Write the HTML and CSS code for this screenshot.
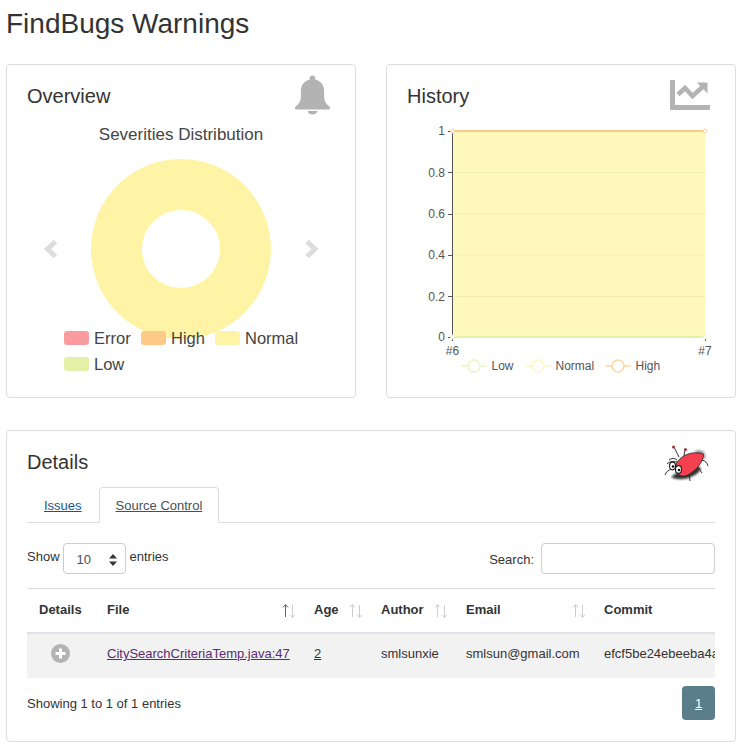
FILE: index.html
```html
<!DOCTYPE html>
<html lang="en">
<head>
<meta charset="utf-8">
<title>FindBugs Warnings</title>
<link rel="stylesheet" href="styles.css">
</head>
<body>
<h1 class="page-title">FindBugs Warnings</h1>
<div class="charts">
  <section class="card">
    <div class="card-head">
      <h2>Overview</h2>
      <svg class="bell" viewBox="0 0 36 40" width="35" height="40"><path fill="#b3b3b3" d="M18 0c-1.700 0-3 1.300-3 3v1.200C9.200 5.500 6 10 6 16v6c0 4.500-2 7-5 9.500C0 32.300 0 33 0 33.500 0 34.500 .8 35 1.600 35h32.800c.8 0 1.600-.5 1.600-1.500 0-.5 0-1.200-1-2C32 29 30 26.500 30 22v-6c0-6-3.200-10.500-9-11.800V3c0-1.700-1.300-3-3-3z"/><path fill="#b3b3b3" d="M13 36.500h10C23 38.500 20.800 40 18 40s-5-1.500-5-3.500z"/></svg>
    </div>
    <svg class="chart" viewBox="27 115 308 262" width="308" height="262">
      <text class="pie-title" x="181" y="140" text-anchor="middle">Severities Distribution</text>
      <path class="chev" d="M55.500 241.500l-8 7.500 8 7.500" />
      <path class="chev" d="M307 241.500l8 7.500-8 7.500" />
      <circle class="donut" cx="181" cy="249" r="64.500" />
      <rect class="sw-error" x="64" y="331" width="25" height="14" rx="3"/>
      <text class="leg" x="94" y="344">Error</text>
      <rect class="sw-high" x="141" y="331" width="25" height="14" rx="3"/>
      <text class="leg" x="171" y="344">High</text>
      <rect class="sw-normal" x="215" y="331" width="25" height="14" rx="3"/>
      <text class="leg" x="245" y="344">Normal</text>
      <rect class="sw-low" x="64" y="357" width="25" height="14" rx="3"/>
      <text class="leg" x="94" y="370">Low</text>
    </svg>
  </section>
  <section class="card">
    <div class="card-head">
      <h2>History</h2>
      <svg class="trend" viewBox="0 0 40 30" width="40" height="30">
        <path fill="#b3b3b3" d="M1 0h3c.6 0 1 .4 1 1v24h34c.6 0 1 .4 1 1v3c0 .6-.4 1-1 1H1c-.6 0-1-.4-1-1V1c0-.6.4-1 1-1z"/>
        <path fill="none" stroke="#b3b3b3" stroke-width="4.500" d="M8 14.500l7-6.500 7.500 8L33 6.500"/>
        <path fill="#b3b3b3" d="M26.800 2.500h10c.4 0 .7.300.7.700v10.300z"/>
      </svg>
    </div>
    <svg class="chart" viewBox="407 115 308 262" width="308" height="262">
      <rect class="area" x="452.500" y="131" width="252.500" height="206"/>
      <path class="grid" d="M452.500 172.500H705M452.500 214H705M452.500 255H705M452.500 296.500H705"/>
      <path class="axis" d="M452.500 131V341M448 131.500h4.500M448 172.500h4.500M448 214.500h4.500M448 255.500h4.500M448 296.500h4.500M448 337.500h4.500M705.500 337V341"/>
      <path class="line-high" d="M452.500 131H705"/>
      <path class="line-low" d="M452.500 337H705"/>
      <circle class="dot-high" cx="452.500" cy="131" r="2"/>
      <circle class="dot-high" cx="705" cy="131" r="2"/>
      <circle class="dot-low" cx="452.500" cy="337" r="2"/>
      <circle class="dot-low" cx="705" cy="337" r="2"/>
      <text class="tick" x="445" y="135" text-anchor="end">1</text>
      <text class="tick" x="445" y="177" text-anchor="end">0.8</text>
      <text class="tick" x="445" y="218" text-anchor="end">0.6</text>
      <text class="tick" x="445" y="259" text-anchor="end">0.4</text>
      <text class="tick" x="445" y="301" text-anchor="end">0.2</text>
      <text class="tick" x="445" y="341" text-anchor="end">0</text>
      <text class="tick" x="452.500" y="355" text-anchor="middle">#6</text>
      <text class="tick" x="705" y="355" text-anchor="middle">#7</text>
      <path class="lg-low" d="M461.500 366h25"/><circle class="lg-low lg-dot" cx="474" cy="366" r="6"/>
      <text class="tick" x="491.500" y="370">Low</text>
      <path class="lg-normal" d="M525.500 366h25"/><circle class="lg-normal lg-dot" cx="538" cy="366" r="6"/>
      <text class="tick" x="555.500" y="370">Normal</text>
      <path class="lg-high" d="M605.500 366h25"/><circle class="lg-high lg-dot" cx="618" cy="366" r="6"/>
      <text class="tick" x="635.500" y="370">High</text>
    </svg>
  </section>
</div>
<section class="card details">
  <div class="card-head details-head">
    <h2>Details</h2>
    <svg class="bug" viewBox="0 0 45 38" width="45" height="38">
      <path class="bug-shadow" d="M7 32c5 3 14 3 20 0 5-2 9-5 10-9l-6-3-16 6z"/>
      <path class="bug-shadow-top" d="M30 6c4-1 8-1 10 1l2 6-3 1z"/>
      <path class="bug-leg" d="M1 30c1-3 3-5 7-6M3 19c3-3 6-3 10-2M5 15c3-2 5-2 8 0M26 36l-1-7M38 28l-4-6M44 21c-1-3-2-5-6-6M10 2l5 10M21 5l-1 6"/>
      <circle cx="9.500" cy="2" r="1.600" fill="#a83a3f"/><circle cx="21.500" cy="4.500" r="1.600" fill="#a83a3f"/>
      <path fill="#f5404f" stroke="#222" stroke-width=".8" d="M12.500 18c3-5 9-9 16-10 4-.5 8-.2 11 1.300 0 3-1 6-3 9-4 6-9 10.500-15 12.500-4 .8-7-.5-8.500-4-.8-3-1.500-6-.5-8.800z"/>
      <ellipse cx="8.500" cy="21" rx="3" ry="3.800" fill="#fff" stroke="#222" stroke-width="1.200"/>
      <ellipse cx="14.500" cy="24.500" rx="3" ry="3.800" fill="#fff" stroke="#222" stroke-width="1.200"/>
      <circle cx="9" cy="21.500" r="1.300" fill="#111"/><circle cx="15" cy="25" r="1.300" fill="#111"/>
    </svg>
  </div>
  <ul class="tabs">
    <li class="tab"><a href="#issues">Issues</a></li>
    <li class="tab active"><a href="#scm">Source Control</a></li>
  </ul>
  <div class="controls">
    <label class="length">Show
      <span class="select">10<svg viewBox="0 0 8 12" width="8" height="12"><path fill="#333" d="M4 0l4 4.500H0zM4 12L0 7.500h8z"/></svg></span>
      entries</label>
    <label class="search">Search:<span class="input"></span></label>
  </div>
  <div class="table-wrap">
    <table class="data">
      <colgroup><col class="c1"><col class="c2"><col class="c3"><col class="c4"><col class="c5"><col class="c6"></colgroup>
      <thead>
        <tr>
          <th>Details</th>
          <th><span class="th"><span>File</span><svg class="sort on" viewBox="0 0 13 14" width="13" height="14"><path class="up" d="M3.500 13V1M1 3.500l2.500-3 2.500 3"/><path class="down" d="M10.500 1v12M8 10.500l2.500 3 2.500-3"/></svg></span></th>
          <th><span class="th"><span>Age</span><svg class="sort" viewBox="0 0 13 14" width="13" height="14"><path class="up" d="M3.500 13V1M1 3.500l2.500-3 2.500 3"/><path class="down" d="M10.500 1v12M8 10.500l2.500 3 2.500-3"/></svg></span></th>
          <th><span class="th"><span>Author</span><svg class="sort" viewBox="0 0 13 14" width="13" height="14"><path class="up" d="M3.500 13V1M1 3.500l2.500-3 2.500 3"/><path class="down" d="M10.500 1v12M8 10.500l2.500 3 2.500-3"/></svg></span></th>
          <th><span class="th"><span>Email</span><svg class="sort" viewBox="0 0 13 14" width="13" height="14"><path class="up" d="M3.500 13V1M1 3.500l2.500-3 2.500 3"/><path class="down" d="M10.500 1v12M8 10.500l2.500 3 2.500-3"/></svg></span></th>
          <th>Commit</th>
        </tr>
      </thead>
      <tbody>
        <tr>
          <td class="plus"><svg viewBox="0 0 19 19" width="19" height="19"><circle cx="9.500" cy="9.500" r="9.500" fill="#b3b3b3"/><path d="M9.500 4.500v10M4.500 9.500h10" stroke="#fff" stroke-width="3"/></svg></td>
          <td><a class="visited" href="#file">CitySearchCriteriaTemp.java:47</a></td>
          <td><a class="dark" href="#age">2</a></td>
          <td>smlsunxie</td>
          <td>smlsun@gmail.com</td>
          <td>efcf5be24ebeeba4a</td>
        </tr>
      </tbody>
    </table>
  </div>
  <div class="table-foot">
    <span>Showing 1 to 1 of 1 entries</span>
    <a class="page-btn" href="#p1">1</a>
  </div>
</section>
</body>
</html>
```
FILE: styles.css
```css
* { box-sizing: border-box; }
html, body { margin: 0; background: #fff; }
body {
  padding: 0 10px 0 6px;
  width: 746px;
  height: 749px;
  overflow: hidden;
  font-family: "Liberation Sans", Arial, sans-serif;
  font-size: 13px;
  color: #333;
}
.page-title {
  margin: 0;
  height: 64px;
  padding-top: 8px;
  font-size: 28px;
  line-height: 32px;
  font-weight: 400;
  color: #333;
}
.charts {
  display: grid;
  grid-template-columns: 350px 350px;
  column-gap: 30px;
}
.card {
  border: 1px solid #ddd;
  border-radius: 4px;
  padding: 10px 20px 20px;
  height: 334px;
  background: #fff;
}
.card-head {
  display: flex;
  justify-content: space-between;
  height: 40px;
}
.card-head h2 {
  margin: 0;
  font-size: 20px;
  line-height: 23px;
  padding-top: 10px;
  font-weight: 400;
  color: #333;
}
.bell { margin-right: 5px; }
.trend { margin: 5px 5px 0 0; }
.chart { display: block; }
.pie-title { font-size: 17px; fill: #444; }
.chev { fill: none; stroke: #ddd; stroke-width: 5; }
.donut { fill: none; stroke: #fff4a5; stroke-width: 51; }
.leg { font-size: 16.500px; fill: #444; }
.sw-error { fill: #fa9c9f; }
.sw-high { fill: #fdc986; }
.sw-normal { fill: #fff4a5; }
.sw-low { fill: #e4efa8; }
.area { fill: #fff8bd; }
.grid { fill: none; stroke: #f5ecb3; stroke-width: 1; }
.axis { fill: none; stroke: #555; stroke-width: 1; }
.line-high { fill: none; stroke: #fdc986; stroke-width: 2; }
.line-low { fill: none; stroke: #e4efa8; stroke-width: 2; }
.dot-high { fill: #fff; stroke: #fdd49c; stroke-width: 1; }
.dot-low { fill: #fff; stroke: #eef4c4; stroke-width: 1; }
.tick { font-size: 12px; fill: #555; }
.lg-low, .lg-normal, .lg-high { fill: none; stroke-width: 1.500; }
.lg-dot { fill: #fff; }
.lg-low { stroke: #eef4c4; }
.lg-normal { stroke: #fff7c4; }
.lg-high { stroke: #fdd7a4; }

.details {
  margin-top: 32px;
  height: 312px;
}
.details-head { height: 46px; }
.bug { margin: 4px 6px 0 0; }
.bug-shadow { fill: #333; filter: blur(1px); }
.bug-shadow-top { fill: #999; filter: blur(.8px); }
.bug-leg { fill: none; stroke: #333; stroke-width: 1; }
.tabs {
  list-style: none;
  margin: 0;
  padding: 0;
  display: flex;
  height: 36px;
  border-bottom: 1px solid #ddd;
}
.tab { height: 36px; padding: 10px 16px 0; border: 1px solid transparent; border-radius: 4px 4px 0 0; line-height: 15px; }
.tab a { color: #14568f; }
.tab.active { border-color: #ddd; border-bottom-color: #fff; background: #fff; }
.tab.active a { color: #495057; }
.controls {
  display: flex;
  justify-content: space-between;
  margin-top: 20px;
  height: 31px;
}
.length, .search { display: flex; align-items: flex-start; }
.length { line-height: 28px; }
.search { line-height: 33px; }
.select {
  display: flex;
  align-items: center;
  justify-content: space-between;
  width: 63px;
  height: 31px;
  margin: 0 4px 0 3px;
  padding: 2px 8px 0 13px;
  border: 1px solid #ccc;
  border-radius: 4px;
  color: #495057;
}
.input {
  display: block;
  width: 174px;
  height: 31px;
  margin-left: 7px;
  border: 1px solid #ccc;
  border-radius: 4px;
}
.table-wrap {
  margin-top: 14px;
  overflow: hidden;
  border-top: 1px solid #ddd;
}
.data {
  table-layout: fixed;
  width: 900px;
  border-collapse: collapse;
}
.c1 { width: 68px; }
.c2 { width: 207px; }
.c3 { width: 67px; }
.c4 { width: 85px; }
.c5 { width: 138px; }
.c6 { width: 335px; }
.data th {
  height: 44px;
  padding: 0 8px 3px 12px;
  text-align: left;
  font-weight: 700;
  color: #333;
  border-bottom: 2px solid #dee2e6;
}
.th { display: flex; justify-content: space-between; align-items: center; }
.sort { margin: 3px -1px 0 0; fill: none; stroke: #ccc; stroke-width: 1; }
.sort.on .up { stroke: #666; }
.data td {
  height: 45px;
  padding: 0 12px 5px;
  background: #f2f2f2;
  white-space: nowrap;
  overflow: hidden;
  color: #333;
}
.data td.plus { padding: 0 0 5px 24px; line-height: 0; }
.visited { color: #5b2c6f; }
.dark { color: #333; }
.table-foot {
  display: flex;
  justify-content: space-between;
  align-items: center;
  margin-top: 8px;
  height: 34px;
}
.page-btn {
  display: flex;
  align-items: center;
  justify-content: center;
  width: 33px;
  height: 34px;
  border-radius: 4px;
  background: #5a7d8a;
  color: #fff;
}
```
